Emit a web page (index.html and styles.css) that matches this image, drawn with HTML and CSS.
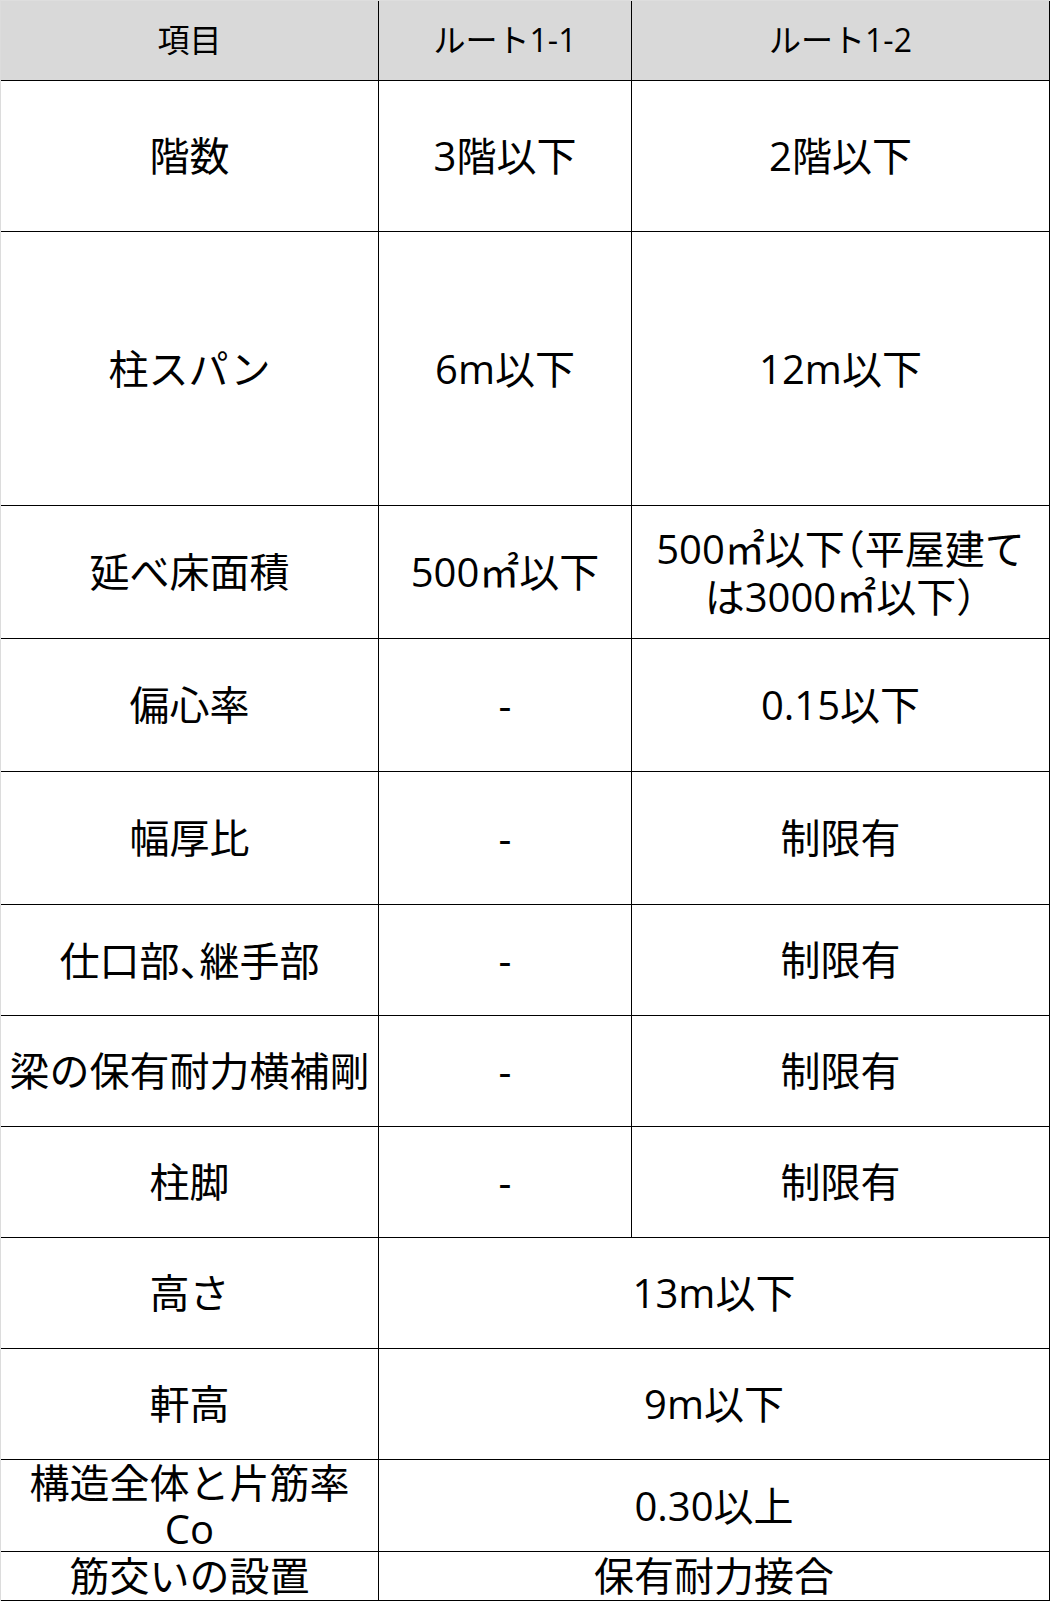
FILE: index.html
```html
<!DOCTYPE html>
<html lang="ja">
<head>
<meta charset="utf-8">
<title>ルート1 比較表</title>
<link rel="stylesheet" href="styles.css">
</head>
<body>
<div class="table" role="table">
  <div class="cell head" role="columnheader">項目</div>
  <div class="cell head" role="columnheader">ルート1-1</div>
  <div class="cell head" role="columnheader">ルート1-2</div>

  <div class="cell">階数</div>
  <div class="cell">3階以下</div>
  <div class="cell">2階以下</div>

  <div class="cell">柱スパン</div>
  <div class="cell">6m以下</div>
  <div class="cell">12m以下</div>

  <div class="cell">延べ床面積</div>
  <div class="cell">500㎡以下</div>
  <div class="cell"><span class="txt">500㎡以下<span class="half">（</span>平屋建て<br>は3000㎡以下<span class="half">）</span></span></div>

  <div class="cell">偏心率</div>
  <div class="cell">-</div>
  <div class="cell">0.15以下</div>

  <div class="cell">幅厚比</div>
  <div class="cell">-</div>
  <div class="cell">制限有</div>

  <div class="cell"><span class="txt">仕口部<span class="half">、</span>継手部</span></div>
  <div class="cell">-</div>
  <div class="cell">制限有</div>

  <div class="cell">梁の保有耐力横補剛</div>
  <div class="cell">-</div>
  <div class="cell">制限有</div>

  <div class="cell">柱脚</div>
  <div class="cell">-</div>
  <div class="cell">制限有</div>

  <div class="cell">高さ</div>
  <div class="cell span2">13m以下</div>

  <div class="cell">軒高</div>
  <div class="cell span2">9m以下</div>

  <div class="cell">構造全体と片筋率<br>Co</div>
  <div class="cell span2">0.30以上</div>

  <div class="cell">筋交いの設置</div>
  <div class="cell span2">保有耐力接合</div>
</div>
</body>
</html>
```

FILE: styles.css
```css
html, body {
  margin: 0;
  padding: 0;
  background: #ffffff;
}

.table {
  display: grid;
  grid-template-columns: 378px 253px 418px;
  grid-template-rows: 80px 151px 274px 133px 133px 133px 111px 111px 111px 111px 111px 92px 49px;
  width: 1050px;
  box-sizing: border-box;
  border-top: 1px solid #dedede;
  border-left: 1px solid #dcdcdc;
  font-family: "Open Sans", "Noto Sans CJK JP", sans-serif;
  color: #000000;
}

.cell {
  display: flex;
  align-items: center;
  justify-content: center;
  text-align: center;
  box-sizing: border-box;
  border-right: 1px solid #000000;
  border-bottom: 1px solid #000000;
  font-size: 40px;
  line-height: 1.15;
  white-space: nowrap;
}

.txt {
  display: block;
}

.head {
  background: #d9d9d9;
  font-size: 32px;
}

.span2 {
  grid-column: span 2;
}

.half {
  font-family: "Noto Sans CJK JP", sans-serif;
  font-feature-settings: "halt";
}
```
